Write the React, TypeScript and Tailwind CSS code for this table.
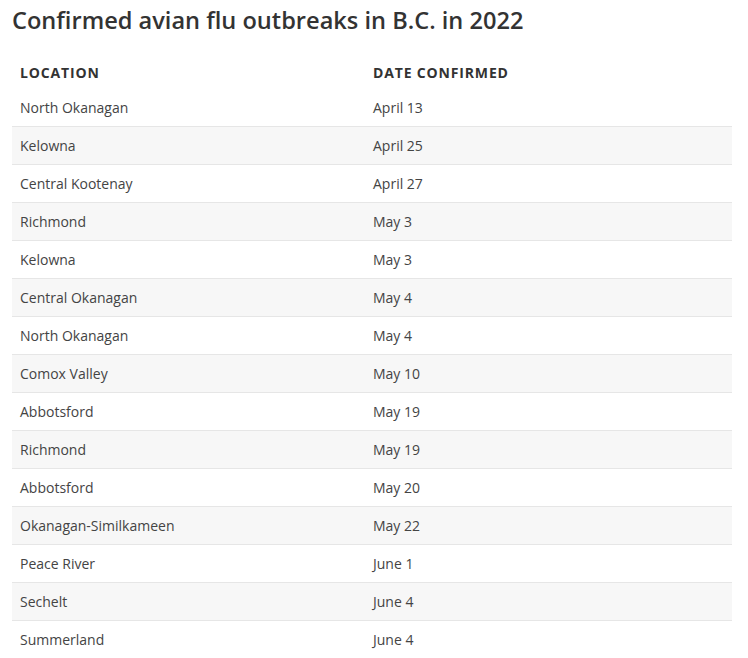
import React from 'react';

const rows: [string, string][] = [
  ['North Okanagan', 'April 13'],
  ['Kelowna', 'April 25'],
  ['Central Kootenay', 'April 27'],
  ['Richmond', 'May 3'],
  ['Kelowna', 'May 3'],
  ['Central Okanagan', 'May 4'],
  ['North Okanagan', 'May 4'],
  ['Comox Valley', 'May 10'],
  ['Abbotsford', 'May 19'],
  ['Richmond', 'May 19'],
  ['Abbotsford', 'May 20'],
  ['Okanagan-Similkameen', 'May 22'],
  ['Peace River', 'June 1'],
  ['Sechelt', 'June 4'],
  ['Summerland', 'June 4'],
];

export default function App() {
  return (
    <div className="bg-white pl-3 pr-4 font-['Open_Sans',sans-serif] text-[#333]">
      <h1 className="h-[40px] text-[23.6px] font-semibold leading-[40px] text-[#333]">
        Confirmed avian flu outbreaks in B.C. in 2022
      </h1>
      {/* table */}
      <div className="mt-[17px]">
        <div className="flex h-[32px] items-center pb-[2px] text-[14px] font-bold tracking-[0.06em] text-[#333]">
          <div className="w-[353px] px-2">LOCATION</div>
          <div className="px-2">DATE CONFIRMED</div>
        </div>
        {rows.map(([place, date], i) => (
          <div
            key={i}
            className={`flex h-[38px] items-center border-b border-[#e6e6e6] text-[14px] text-[#444] ${
              i % 2 === 1 ? 'bg-[#f7f7f7]' : 'bg-white'
            }`}
          >
            <div className="w-[353px] px-2">{place}</div>
            <div className="px-2">{date}</div>
          </div>
        ))}
      </div>
    </div>
  );
}
